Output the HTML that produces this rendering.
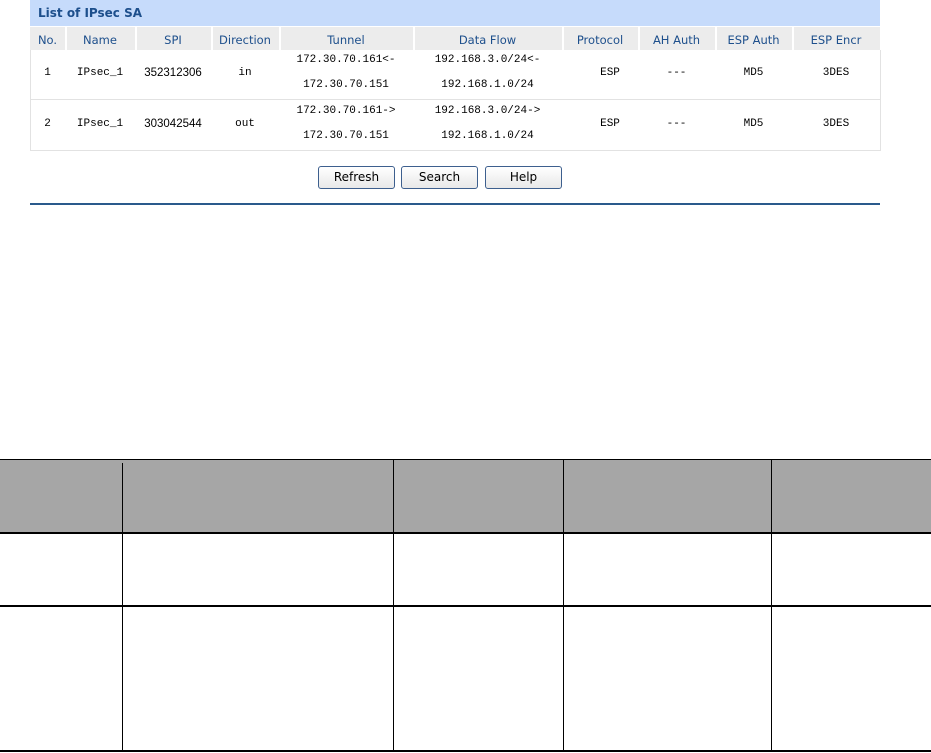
<!DOCTYPE html>
<html><head><style>
body{margin:0;width:931px;height:753px;background:#fff;position:relative;overflow:hidden;font-family:"DejaVu Sans",sans-serif}
.a{position:absolute}
.t{position:absolute;font-size:12px;text-align:center;white-space:nowrap}
.h{color:#1d4f8c;font-size:11.5px;top:33px}
.d{font-family:"Liberation Mono",monospace;font-size:11px;color:#000}
.btn{position:absolute;top:166px;height:21px;border:1px solid #3d5f8e;border-radius:3px;background:linear-gradient(#fff,#e8e8e8);font-size:12px;text-align:center;line-height:21px;color:#000}
.v{position:absolute;background:#000;width:1px}
</style></head><body>
<div class="a" style="left:30px;top:0;width:850px;height:26px;background:#c6dbfb"></div>
<div class="t" style="left:38px;top:6px;font-weight:bold;color:#1d4f8c;font-size:12px">List of IPsec SA</div>
<div class="a" style="left:30px;top:27px;width:850px;height:23px;background:#ececec"></div>
<div class="a" style="left:30px;top:50px;width:849px;height:100px;border:1px solid #e2e2e2;border-top:none"></div>
<div class="a" style="left:30px;top:99px;width:850px;height:1px;background:#e2e2e2"></div>
<div class="a" style="left:65px;top:27px;width:2px;height:23px;background:#fff"></div>
<div class="a" style="left:135px;top:27px;width:2px;height:23px;background:#fff"></div>
<div class="a" style="left:211px;top:27px;width:2px;height:23px;background:#fff"></div>
<div class="a" style="left:279px;top:27px;width:2px;height:23px;background:#fff"></div>
<div class="a" style="left:413px;top:27px;width:2px;height:23px;background:#fff"></div>
<div class="a" style="left:562px;top:27px;width:2px;height:23px;background:#fff"></div>
<div class="a" style="left:638px;top:27px;width:2px;height:23px;background:#fff"></div>
<div class="a" style="left:715px;top:27px;width:2px;height:23px;background:#fff"></div>
<div class="a" style="left:792px;top:27px;width:2px;height:23px;background:#fff"></div>
<div class="t h" style="left:30px;width:35px">No.</div>
<div class="t h" style="left:65px;width:70px">Name</div>
<div class="t h" style="left:135px;width:76px">SPI</div>
<div class="t h" style="left:211px;width:68px">Direction</div>
<div class="t h" style="left:279px;width:134px">Tunnel</div>
<div class="t h" style="left:413px;width:149px">Data Flow</div>
<div class="t h" style="left:562px;width:76px">Protocol</div>
<div class="t h" style="left:638px;width:77px">AH Auth</div>
<div class="t h" style="left:715px;width:77px">ESP Auth</div>
<div class="t h" style="left:792px;width:88px">ESP Encr</div>

<div class="t d" style="left:30px;width:35px;top:67px">1</div>
<div class="t d" style="left:65px;width:70px;top:67px">IPsec_1</div>
<div class="t d" style="left:135px;width:76px;top:67px;font-family:'Liberation Sans';font-size:11.5px">352312306</div>
<div class="t d" style="left:211px;width:68px;top:67px">in</div>
<div class="t d" style="left:279px;width:134px;top:54px">172.30.70.161&lt;-</div>
<div class="t d" style="left:279px;width:134px;top:79px">172.30.70.151</div>
<div class="t d" style="left:413px;width:149px;top:54px">192.168.3.0/24&lt;-</div>
<div class="t d" style="left:413px;width:149px;top:79px">192.168.1.0/24</div>
<div class="t d" style="left:562px;width:56px;top:67px;margin-left:20px">ESP</div>
<div class="t d" style="left:638px;width:77px;top:67px">---</div>
<div class="t d" style="left:715px;width:77px;top:67px">MD5</div>
<div class="t d" style="left:792px;width:88px;top:67px">3DES</div>

<div class="t d" style="left:30px;width:35px;top:118px">2</div>
<div class="t d" style="left:65px;width:70px;top:118px">IPsec_1</div>
<div class="t d" style="left:135px;width:76px;top:118px;font-family:'Liberation Sans';font-size:11.5px">303042544</div>
<div class="t d" style="left:211px;width:68px;top:118px">out</div>
<div class="t d" style="left:279px;width:134px;top:105px">172.30.70.161-&gt;</div>
<div class="t d" style="left:279px;width:134px;top:130px">172.30.70.151</div>
<div class="t d" style="left:413px;width:149px;top:105px">192.168.3.0/24-&gt;</div>
<div class="t d" style="left:413px;width:149px;top:130px">192.168.1.0/24</div>
<div class="t d" style="left:562px;width:56px;top:118px;margin-left:20px">ESP</div>
<div class="t d" style="left:638px;width:77px;top:118px">---</div>
<div class="t d" style="left:715px;width:77px;top:118px">MD5</div>
<div class="t d" style="left:792px;width:88px;top:118px">3DES</div>

<div class="btn" style="left:318px;width:75px">Refresh</div>
<div class="btn" style="left:401px;width:75px">Search</div>
<div class="btn" style="left:485px;width:75px">Help</div>
<div class="a" style="left:30px;top:203px;width:850px;height:2px;background:#2a5a8c"></div>

<div class="a" style="left:0;top:459px;width:931px;height:73px;background:#a6a6a6"></div>
<div class="a" style="left:0;top:459px;width:931px;height:1px;background:#000"></div>
<div class="a" style="left:0;top:532px;width:931px;height:2px;background:#000"></div>
<div class="a" style="left:0;top:605px;width:931px;height:2px;background:#000"></div>
<div class="a" style="left:0;top:750px;width:931px;height:2px;background:#000"></div>
<div class="v" style="left:122px;top:463px;height:289px"></div>
<div class="v" style="left:393px;top:459px;height:293px"></div>
<div class="v" style="left:563px;top:459px;height:293px"></div>
<div class="v" style="left:771px;top:459px;height:293px"></div>
</body></html>
